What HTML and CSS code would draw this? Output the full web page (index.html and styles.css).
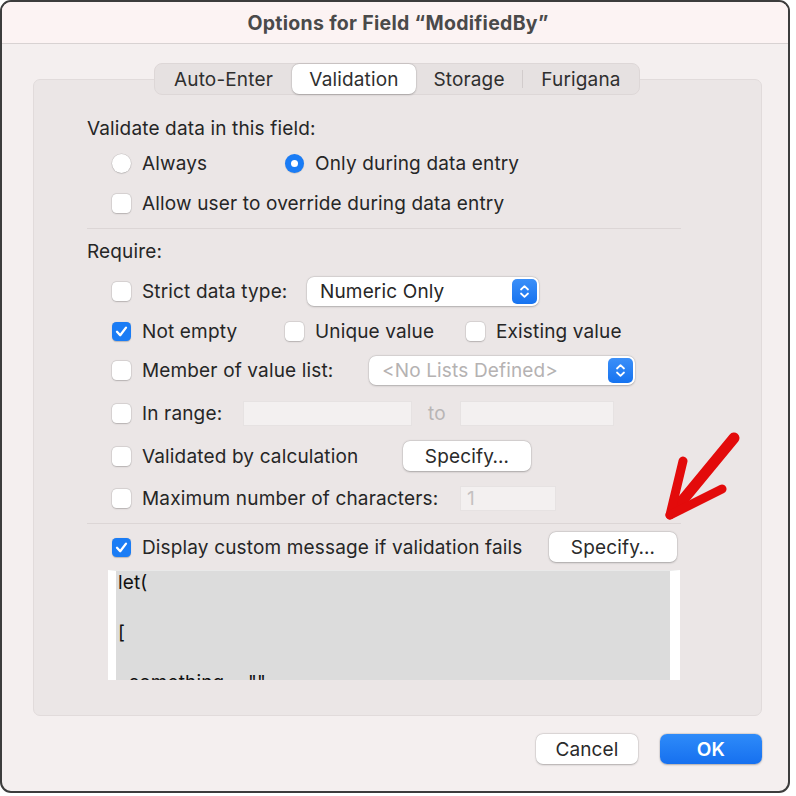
FILE: index.html
```
<!DOCTYPE html>
<html>
<head>
<meta charset="utf-8">
<link rel="stylesheet" href="styles.css">
</head>
<body>
<div class="window">
  <div class="titlebar">Options for Field “ModifiedBy”</div>
  <div class="content">
    <div class="segmented">
      <div class="seg seg-a">Auto-Enter</div>
      <div class="seg seg-v selected">Validation</div>
      <div class="seg seg-s">Storage</div>
      <div class="seg-div"></div>
      <div class="seg seg-f">Furigana</div>
    </div>
    <div class="tabbox">
      <div class="row r-a"><span class="label">Validate data in this field:</span></div>
      <div class="row r-b indent">
        <div class="item w173"><span class="radio"></span><span class="label">Always</span></div>
        <div class="item"><span class="radio on"></span><span class="label">Only during data entry</span></div>
      </div>
      <div class="row r-c indent">
        <div class="item"><span class="check"></span><span class="label">Allow user to override during data entry</span></div>
      </div>
      <div class="sep s1"></div>
      <div class="row r-d"><span class="label">Require:</span></div>
      <div class="row r-e indent">
        <div class="item w195"><span class="check"></span><span class="label">Strict data type:</span></div>
        <div class="popup p1"><span class="ptext">Numeric Only</span><span class="stepper"><svg width="25" height="25" viewBox="0 0 25 25"><path d="M9 10.5 L12.5 7.2 L16 10.5 M9 14.5 L12.5 17.8 L16 14.5" fill="none" stroke="#fff" stroke-width="1.8" stroke-linecap="round" stroke-linejoin="round"/></svg></span></div>
      </div>
      <div class="row r-f indent">
        <div class="item w173"><span class="check on"><svg width="19" height="19" viewBox="0 0 19 19"><path d="M5 9.8 L8.2 13.2 L14 5.6" fill="none" stroke="#fff" stroke-width="2.3" stroke-linecap="round" stroke-linejoin="round"/></svg></span><span class="label">Not empty</span></div>
        <div class="item w181"><span class="check"></span><span class="label">Unique value</span></div>
        <div class="item w-ex"><span class="check"></span><span class="label">Existing value</span></div>
      </div>
      <div class="row r-g indent">
        <div class="item w257"><span class="check"></span><span class="label">Member of value list:</span></div>
        <div class="popup p2"><span class="ptext dim">&lt;No Lists Defined&gt;</span><span class="stepper"><svg width="25" height="25" viewBox="0 0 25 25"><path d="M9 10.5 L12.5 7.2 L16 10.5 M9 14.5 L12.5 17.8 L16 14.5" fill="none" stroke="#fff" stroke-width="1.8" stroke-linecap="round" stroke-linejoin="round"/></svg></span></div>
      </div>
      <div class="row r-h indent">
        <div class="item w131"><span class="check"></span><span class="label">In range:</span></div>
        <div class="field f1"></div>
        <span class="to">to</span>
        <div class="field f2"></div>
      </div>
      <div class="row r-i indent">
        <div class="item w291"><span class="check"></span><span class="label">Validated by calculation</span></div>
        <div class="btn">Specify…</div>
      </div>
      <div class="row r-j indent">
        <div class="item w348"><span class="check"></span><span class="label">Maximum number of characters:</span></div>
        <div class="field f3">1</div>
      </div>
      <div class="sep s2"></div>
      <div class="row r-k indent">
        <div class="item w437"><span class="check on"><svg width="19" height="19" viewBox="0 0 19 19"><path d="M5 9.8 L8.2 13.2 L14 5.6" fill="none" stroke="#fff" stroke-width="2.3" stroke-linecap="round" stroke-linejoin="round"/></svg></span><span class="label">Display custom message if validation fails</span></div>
        <div class="btn">Specify…</div>
      </div>
      <div class="textview">
        <div class="code">let(</div>
        <div class="code">&nbsp;</div>
        <div class="code">[</div>
        <div class="code">&nbsp;</div>
        <div class="code">&nbsp;&nbsp;something = ""</div>
      </div>
    </div>
    <div class="buttons">
      <div class="btn wide">Cancel</div>
      <div class="btn wide primary">OK</div>
    </div>
  </div>
  <svg class="arrow" width="796" height="796" viewBox="0 0 796 796">
    <g fill="none" stroke="#e30b0b" stroke-linecap="round" stroke-linejoin="round">
      <path d="M734 438 L673 512" stroke-width="11"/>
      <path d="M670 515 L683 461" stroke-width="9"/>
      <path d="M670 515 L722 489" stroke-width="9"/>
    </g>
  </svg>
</div>
</body>
</html>
```
FILE: styles.css
```
html, body {
  margin: 0;
  padding: 0;
  background: #ffffff;
}
body {
  width: 796px;
  height: 796px;
  overflow: hidden;
  font-family: Inter, "Noto Sans", sans-serif;
  font-size: 19px;
  letter-spacing: 0.15px;
  color: #262626;
}
.window {
  position: relative;
  width: 790px;
  height: 793px;
  box-sizing: border-box;
  border: 2px solid #3c3c3c;
  border-radius: 11px;
  background: #f4efef;
  overflow: hidden;
}
.titlebar {
  height: 41px;
  background: #fcf3f3;
  border-bottom: 1px solid #d8d2d2;
  display: flex;
  align-items: center;
  justify-content: center;
  font-weight: 700;
  font-size: 19.5px;
  letter-spacing: 0.3px;
  color: #4a4a4a;
  padding-left: 6px;
}
.content {
  padding: 19px 0 0 31px;
  display: flex;
  flex-direction: column;
}
.segmented {
  align-self: flex-start;
  margin-left: 121px;
  height: 32px;
  box-sizing: border-box;
  width: 486px;
  display: flex;
  align-items: center;
  background: #e6e1e1;
  border: 1px solid #ddd7d7;
  border-radius: 8px;
  margin-bottom: -16px;
  position: relative;
  z-index: 2;
}
.seg {
  height: 30px;
  display: flex;
  align-items: center;
  justify-content: center;
  color: #2f2f2f;
}
.seg-a { width: 137px; }
.seg-v { width: 124px; }
.seg-s { width: 106px; }
.seg-f { width: 116px; }
.seg-div {
  width: 1px;
  height: 18px;
  background: #d2cccc;
}
.seg.selected {
  background: #ffffff;
  border-radius: 7px;
  box-shadow: 0 0.5px 2px rgba(0,0,0,0.22), 0 0 0 0.5px rgba(0,0,0,0.08);
}
.tabbox {
  width: 729px;
  height: 637px;
  box-sizing: border-box;
  background: #ebe6e6;
  border: 1px solid #e1dbdb;
  border-radius: 7px;
  padding: 30px 0 0 53px;
  display: flex;
  flex-direction: column;
}
.row {
  display: flex;
  align-items: center;
  height: 34px;
  flex-shrink: 0;
}
.indent { padding-left: 25px; }
.r-a { height: 36px; }
.r-b { height: 34px; }
.r-c { margin-top: 6px; }
.sep {
  width: 594px;
  height: 1px;
  background: #dcd6d6;
  flex-shrink: 0;
}
.s1 { margin-top: 8px; }
.r-d { margin-top: 5px; }
.r-e { margin-top: 6px; }
.r-f { margin-top: 6px; }
.r-g { margin-top: 5px; }
.r-h { margin-top: 9px; }
.r-i { margin-top: 9px; }
.r-j { margin-top: 8px; }
.s2 { margin-top: 8px; }
.r-k { margin-top: 6px; }
.item {
  display: flex;
  align-items: center;
  flex-shrink: 0;
}
.w131 { width: 131px; }
.w173 { width: 173px; }
.w181 { width: 181px; }
.w195 { width: 195px; }
.w257 { width: 257px; }
.w291 { width: 291px; }
.w348 { width: 348px; }
.w437 { width: 437px; }
.label {
  white-space: nowrap;
  color: #262626;
}
.check, .radio {
  width: 19px;
  height: 19px;
  box-sizing: border-box;
  background: #ffffff;
  margin-right: 11px;
  flex-shrink: 0;
  box-shadow: 0 0.5px 1.5px rgba(0,0,0,0.18), 0 0 0 0.5px rgba(0,0,0,0.12);
  display: flex;
  align-items: center;
  justify-content: center;
}
.check { border-radius: 4.5px; }
.radio { border-radius: 50%; }
.check.on {
  background: #1a7cf5;
  box-shadow: 0 0.5px 1px rgba(0,0,0,0.2);
}
.radio.on {
  background: #1a7cf5;
  box-shadow: 0 0.5px 1px rgba(0,0,0,0.2);
}
.radio.on::after {
  content: "";
  width: 7px;
  height: 7px;
  border-radius: 50%;
  background: #ffffff;
}
.popup {
  height: 29px;
  box-sizing: border-box;
  background: #ffffff;
  border-radius: 7px;
  box-shadow: 0 0.5px 2px rgba(0,0,0,0.22), 0 0 0 0.5px rgba(0,0,0,0.08);
  display: flex;
  align-items: center;
  justify-content: space-between;
  padding: 0 2px 0 13px;
}
.p1 { width: 232px; }
.p2 { width: 266px; }
.ptext { white-space: nowrap; }
.ptext.dim { color: #b5b2b2; }
.stepper {
  width: 25px;
  height: 25px;
  border-radius: 5px;
  background: linear-gradient(#3b8ff8, #1673f0);
  display: flex;
}
.field {
  height: 25px;
  box-sizing: border-box;
  background: #f3f0f0;
  border: 1px solid #e6e2e2;
  color: #c4c1c1;
  padding-left: 6px;
  display: flex;
  align-items: center;
}
.f1 { width: 169px; }
.f2 { width: 154px; }
.f3 { width: 96px; }
.to {
  color: #b8b5b5;
  margin: 0 14px 0 16px;
}
.btn {
  width: 128px;
  height: 30px;
  box-sizing: border-box;
  background: #ffffff;
  border-radius: 7px;
  box-shadow: 0 0.5px 2px rgba(0,0,0,0.25), 0 0 0 0.5px rgba(0,0,0,0.08);
  display: flex;
  align-items: center;
  justify-content: center;
  color: #2a2a2a;
  flex-shrink: 0;
}
.textview {
  margin-top: 6px;
  margin-left: 21px;
  width: 572px;
  height: 110px;
  box-sizing: border-box;
  background: #dcdcdc;
  border-left: 8px solid #ffffff;
  border-right: 10px solid #ffffff;
  border-top: 1px solid #e9e9e9;
  padding: 1px 0 0 2px;
  overflow: hidden;
  flex-shrink: 0;
}
.code {
  height: 25px;
  line-height: 22px;
  color: #111111;
  white-space: pre;
}
.buttons {
  display: flex;
  justify-content: flex-end;
  gap: 22px;
  width: 729px;
  margin-top: 18px;
}
.btn.wide { width: 102px; }
.btn.primary {
  background: linear-gradient(#2e8bf9, #1670ef);
  color: #ffffff;
  font-weight: 600;
}
.arrow {
  position: absolute;
  left: -2px;
  top: -2px;
  pointer-events: none;
}
```
